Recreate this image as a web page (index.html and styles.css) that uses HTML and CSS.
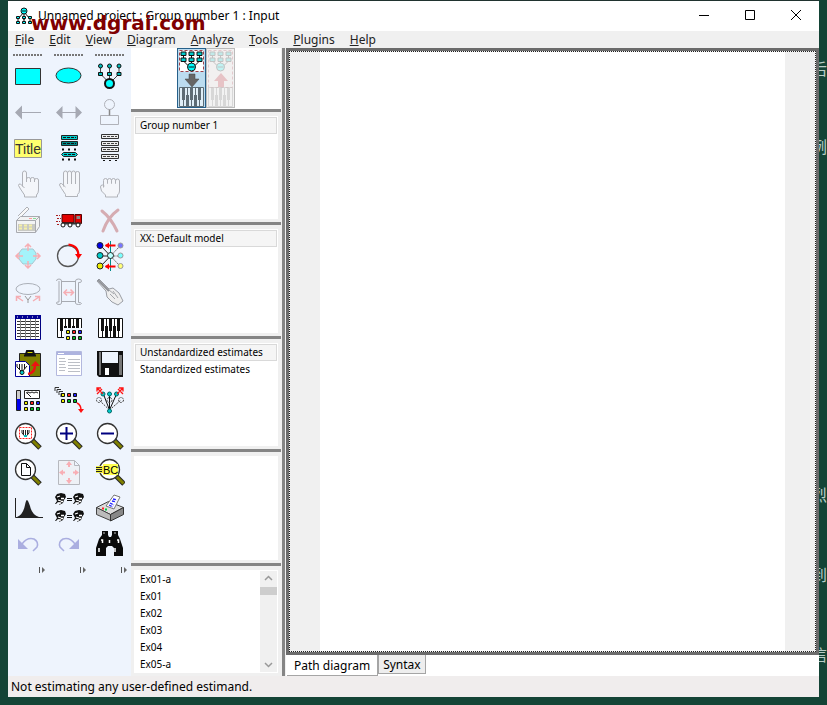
FILE: index.html
```html
<!DOCTYPE html>
<html lang="en">
<head>
  <meta charset="UTF-8" />
  <meta name="viewport" content="width=device-width, initial-scale=1.0" />
  <title>Unnamed project : Group number 1 : Input</title>
  <link rel="stylesheet" href="styles.css">
</head>
<body>

  <!-- Desktop text behind the window -->
  <div class="desktop-text" lang="zh" aria-hidden="true">
    <span class="note note-1">后</span>
    <span class="note note-2">例</span>
    <span class="note note-3">烈</span>
    <span class="note note-4">到</span>
    <span class="note note-5">信</span>
  </div>

  <!-- Shared shapes -->
  <svg class="shapes" aria-hidden="true">
    <defs>
      <g id="lens">
        <path d="M19 19l8 8" stroke="#222" stroke-width="5" />
        <path d="M19.500 19.500l7 7" stroke="#808000" stroke-width="3" />
        <circle cx="12.500" cy="12.500" r="10" fill="#fff" stroke="#333" stroke-width="1.300" />
      </g>
      <g id="chips" stroke="#111">
        <path d="M.5.5h3v3h-3zM.5 6.500h3v3h-3z" fill="#ee0" />
        <path d="M6.500.5h3v3h-3z" fill="#f22" />
        <path d="M12.500.5h3v3h-3z" fill="#22f" />
        <path d="M6.500 6.500h3v3h-3zM12.500 6.500h3v3h-3z" fill="#0b2" />
      </g>
      <g id="piano">
        <path d="M.5.5h24v19H.5z" fill="#fff" stroke="#111" />
        <path d="M4.500 0v20M8.500 0v20M12.500 0v20M16.500 0v20M20.500 0v20" stroke="#111" />
        <path d="M4.500 1v12M8.500 8v11M12.500 1v12M16.500 8v11M20.500 1v12" stroke="#111" stroke-width="3" />
      </g>
      <g id="tree" stroke="#111">
        <path d="M3 3v7l8 8M11 3v15M19 3v7l-8 8" fill="none" />
        <path d="M.5 1h5v3.500h-5zM8.500 1h5v3.500h-5zM16.500 1h5v3.500h-5zM.5 7h5v3.500h-5zM8.500 7h5v3.500h-5zM16.500 7h5v3.500h-5z" fill="#0cc" />
        <circle cx="11" cy="16" r="4" fill="#0ff" />
        <path d="M8 16h6" />
      </g>
      <g id="face">
        <path d="M1 4l2-3 4-1 4 1 1 3-2 3-1 3-4 2 1-2-2-1-2 2H1l2-3z" fill="#111" />
        <path d="M3 4l3-1M7 5.500h3M4 7l3 1M7 8.500h2M4.500 10H7" stroke="#fff" stroke-width="1.300" fill="none" />
      </g>
    </defs>
  </svg>

  <div class="window">

    <header class="titlebar">
      <svg class="app-icon" viewBox="0 0 18 18">
        <path d="M9 5L3 12M9 5v8M9 5l6 7M3 12v4M9 12v4M15 12v4" stroke="#111" fill="none" />
        <circle cx="9" cy="4" r="3" fill="#0ff" stroke="#111" /><path d="M7 4h4" stroke="#111" />
        <path d="M1.500 9.500h3v2h-3zM7.500 9.500h3v2h-3zM13.500 9.500h3v2h-3zM1.500 14.500h3v2h-3zM7.500 14.500h3v2h-3zM13.500 14.500h3v2h-3z" fill="#0ff" stroke="#111" />
      </svg>
      <h1>Unnamed project : Group number 1 : Input</h1>
      <div class="window-buttons">
        <button aria-label="Minimize"><svg viewBox="0 0 12 12"><path d="M1 5.500h10" /></svg></button>
        <button aria-label="Maximize"><svg viewBox="0 0 12 12"><path d="M1.500.5h9v9h-9z" /></svg></button>
        <button aria-label="Close"><svg viewBox="0 0 12 12"><path d="M1 0l10 10M11 0L1 10" /></svg></button>
      </div>
      <span class="watermark">www.dgrai.com</span>
    </header>

    <nav class="menubar">
      <a href="#"><u>F</u>ile</a>
      <a href="#"><u>E</u>dit</a>
      <a href="#"><u>V</u>iew</a>
      <a href="#"><u>D</u>iagram</a>
      <a href="#"><u>A</u>nalyze</a>
      <a href="#"><u>T</u>ools</a>
      <a href="#"><u>P</u>lugins</a>
      <a href="#"><u>H</u>elp</a>
    </nav>

    <main class="workspace">

      <!-- Tool palette -->
      <div class="toolbar">
        <div class="grip"></div>
        <div class="grip"></div>
        <div class="grip"></div>

        <button aria-label="Draw observed variables"><svg viewBox="0 0 30 30"><path d="M2.500 7.500h25v16h-25z" fill="#0ff" stroke="#333" /></svg></button>
        <button aria-label="Draw unobserved variables"><svg viewBox="0 0 30 30"><ellipse cx="14.500" cy="14.500" rx="12.500" ry="7.500" fill="#0ff" stroke="#333" /></svg></button>
        <button aria-label="Draw latent variable with indicators"><svg viewBox="0 0 30 30">
          <path d="M5.500 5v8l9 9M14.500 5v17M24 5v8l-9 9" fill="none" stroke="#444" />
          <g fill="#0bb" stroke="#111"><circle cx="5.500" cy="5" r="2" /><circle cx="14.500" cy="5" r="2" /><circle cx="24" cy="5" r="2" /><path d="M3.500 11.500h4v3h-4zM12.500 11.500h4v3h-4zM22 11.500h4v3h-4z" /></g>
          <circle cx="14.500" cy="22.500" r="4.500" fill="#0ff" stroke="#111" stroke-width="2" />
        </svg></button>

        <button aria-label="Draw path"><svg viewBox="0 0 30 30"><path d="M9 15.500h19" stroke="#a6a9b3" /><path d="M2 15.500l7-7v14z" fill="#a6a9b3" /></svg></button>
        <button aria-label="Draw covariance"><svg viewBox="0 0 30 30"><path d="M8 15.500h14" stroke="#a6a9b3" /><path d="M2 15.500l6.500-6.500v13zM28 15.500L21.500 9v13z" fill="#a6a9b3" /></svg></button>
        <button aria-label="Add unique variable"><svg viewBox="0 0 30 30"><g fill="none" stroke="#b0b2b9"><circle cx="14.500" cy="7.500" r="5" /><path d="M5.500 18.500h18v9h-18z" /><path d="M14.500 12.500v6" stroke="#888" stroke-width="1.500" /></g></svg></button>

        <button aria-label="Figure captions"><svg viewBox="0 0 30 30"><path d="M1.500 6.500h27v18h-27z" fill="#ffff6e" stroke="#999" /><text class="caption-glyph" x="2" y="21">Title</text></svg></button>
        <button aria-label="List variables in model"><svg viewBox="0 0 30 30">
          <g fill="#0cc" stroke="#222"><path d="M7.500 2.500h16v4h-16z" /><path d="M7.500 8.500h16v4h-16z" fill="#088" /><path d="M9.500 19.500h12l2 2-2 2h-12l-2-2z" /></g>
          <path d="M9 4.500h13M9 10.500h13M10 21.500h12" stroke="#111" stroke-dasharray="3 1" />
          <path d="M8 16.500h15M8 26.500h15" stroke="#111" stroke-width="2" stroke-dasharray="2 4" />
        </svg></button>
        <button aria-label="List variables in data set"><svg viewBox="0 0 30 30">
          <path d="M6.500 1.500h17v4h-17zM6.500 8.500h17v4h-17zM6.500 14.500h17v4h-17zM6.500 21.500h17v4h-17z" fill="#eee" stroke="#333" />
          <path d="M8 3.500h14M8 10.500h14M8 16.500h14M8 23.500h14" stroke="#444" stroke-dasharray="3 1" /><path d="M8 27.500h15" stroke="#111" stroke-dasharray="2 4" />
        </svg></button>

        <button aria-label="Select one object"><svg viewBox="0 0 30 30"><path class="hand" d="M9.500 17.500V4q0-2 2-2t2 2v9-3q0-1.500 2-1.500t2 1.500v3-3q0-1.500 2-1.500t2 1.500v3-2q0-1.500 2-1.500t2 1.500v10q0 3-2 5v2h-12v-2l-4-6-2-3.500q0-2 2-1.500l4 4" /></svg></button>
        <button aria-label="Select all objects"><svg viewBox="0 0 30 30"><path class="hand" d="M9.500 17.500V4q0-2 2-2t2 2v11V4q0-2 2-2t2 2v11V4q0-2 2-2t2 2v11V4q0-1.500 2-1.500t2 1.500v17q0 3-2 4.500v2h-12v-2l-4-6-2-3.500q0-2 2-1.500l4 3.500" /></svg></button>
        <button aria-label="Deselect all objects"><svg viewBox="0 0 30 30"><path class="hand" d="M8.500 18.500v-7q0-2 2-2t2 2v3-3q0-2 2-2t2 2v3-3q0-2 2-2t2 2v3-2.500q0-2 2-2t2 2v10q0 2.500-2 4v2h-12v-2l-4-4-1-4q0-2 2-2l2 1" /></svg></button>

        <button aria-label="Duplicate objects"><svg viewBox="0 0 30 30">
          <path d="M5 11L14 2l2 2-8 8" fill="#f8f8f8" stroke="#aeb0b6" /><path d="M3.500 15.500l4-4h19v10l-4 6h-19z" fill="#f2f3f4" stroke="#a8aab0" /><path d="M3.500 15.500h19v12M22.500 15.500l4-4" fill="none" stroke="#a8aab0" />
          <path d="M5 19h17v7H5z" fill="#c8c9c4" /><path d="M6 20.500h3M11 20.500h3M16 20.500h3M6 23.500h3M11 23.500h3M16 23.500h3" stroke="#f5f0a8" stroke-width="2" /><path d="M16 13.500h3" stroke="#f99" /><path d="M20 13.500h3" stroke="#8d9" />
        </svg></button>
        <button aria-label="Move objects"><svg viewBox="0 0 30 30">
          <path d="M8 9.500h12v8H8zM21 9.500h6.500v9H21z" fill="#e00000" stroke="#500" /><path d="M8 18.500h19" stroke="#333" stroke-width="2" /><path d="M22.500 11h3.500v3h-3.500z" fill="#888" />
          <path d="M2 10.500h4M3 13.500h4M2 16.500h4M3 19.500h3" stroke="#a22" stroke-dasharray="2 1" /><g fill="#fff" stroke="#111"><circle cx="9" cy="20" r="2" /><circle cx="16" cy="20" r="2" /><circle cx="24" cy="20" r="2" /></g>
        </svg></button>
        <button aria-label="Erase objects"><svg viewBox="0 0 30 30"><path d="M7 6q9 7 15 20M23 5Q13 12 8 26" fill="none" stroke="#d5acb2" stroke-width="3" stroke-linecap="round" /></svg></button>

        <button aria-label="Change shape of objects"><svg viewBox="0 0 30 30">
          <path d="M9 8h11l3 4v6l-4 5h-9l-4-5v-6z" fill="#a4f3fa" stroke="#a9c6cf" />
          <g fill="none" stroke="#f6aeb4" stroke-width="1.500"><path d="M15 3v7M12 6l3-3 3 3M15 20v7M12 24l3 3 3-3M3 15h7M6 12l-3 3 3 3M20 15h7M24 12l3 3-3 3" /></g>
        </svg></button>
        <button aria-label="Rotate indicators"><svg viewBox="0 0 30 30"><circle cx="14" cy="15" r="10.500" fill="none" stroke="#555" stroke-width="1.300" /><path d="M14.500 3.500q10 1 10 11" fill="none" stroke="#f00" stroke-width="2" /><path d="M21 13h7l-3.500 5z" fill="#f00" /></svg></button>
        <button aria-label="Reflect indicators"><svg viewBox="0 0 30 30">
          <path d="M15.500 15L6 5M15.500 15H6M15.500 15L6 25" stroke="#222" /><path d="M15.500 15L25 5M15.500 15H25M15.500 15L25 25" stroke="#666" stroke-dasharray="2 1" /><path d="M15.500 0v30" stroke="#088" />
          <path d="M20.500 4.500h-10M20.500 25.500h-10" stroke="#f00" stroke-width="2" /><path d="M10 4.500l4-3v6zM10 25.500l4-3v6z" fill="#f00" />
          <g stroke="#222"><circle cx="5" cy="4.500" r="3" fill="#00e" /><circle cx="5" cy="14.500" r="3" fill="#0cc" /><circle cx="5" cy="25" r="3" fill="#ee0" /><circle cx="15.500" cy="14.500" r="3" fill="#bff" /></g>
          <g stroke="#999"><circle cx="25.500" cy="4.500" r="2.500" fill="#77f" /><circle cx="25.500" cy="14.500" r="2.500" fill="#7ff" /><circle cx="25.500" cy="25" r="2.500" fill="#ff7" /></g>
        </svg></button>

        <button aria-label="Move parameter values"><svg viewBox="0 0 30 30"><ellipse cx="15" cy="12" rx="12" ry="5.500" fill="none" stroke="#abb0b8" /><path d="M12 19l3 4 3-4M15 22v4" fill="none" stroke="#999" /><path d="M10 24l-6-4M3.500 24v-4.500H8M20 24l6-4M22 19.500h4.500V24" fill="none" stroke="#f4adb3" stroke-width="1.500" /></svg></button>
        <button aria-label="Reposition path diagram"><svg viewBox="0 0 30 30"><g fill="none" stroke="#a8abb2"><path d="M7.500 4.500h14v20h-14zM2.500 4q0-2 2.500-2t2.500 2v22q0 1.500-2.500 1.500t-2.500-1.500 2.500-1V4M21.500 4q0-2 3-2t3 2-3 1.500v20q3 0 3 1t-3 1-3-1.500z" /></g><path d="M10 15.500h9M13 12.500l-3 3 3 3M16.500 12.500l3 3-3 3" fill="none" stroke="#f6aeb4" stroke-width="1.500" /></svg></button>
        <button aria-label="Touch up a variable"><svg viewBox="0 0 30 30"><path d="M2 4l2-2 10 10 4-1 6 5 4 8-5 4-6-3-5-5-1-6z" fill="#eee" stroke="#9a9da4" /><path d="M3 3l11 11" stroke="#8f9298" stroke-width="2" /><path d="M15 17l5 5M18 14l5 7M14 13l5 4" stroke="#a4a6ab" /></svg></button>

        <button aria-label="Select data files"><svg viewBox="0 0 30 30"><path d="M2.500 2.500h25v24h-25z" fill="#fff" stroke="#000080" /><path d="M2 2h26v4H2z" fill="#000090" /><path d="M4 8.500h22M4 11.500h22M4 14.500h22M4 17.500h22M4 20.500h22M4 23.500h22" stroke="#333" /><path d="M7.500 6v20M12.500 6v20M17.500 6v20M22.500 6v20" stroke="#888" /><path d="M4 4h22" stroke="#fff" stroke-dasharray="1 4" /></svg></button>
        <button aria-label="Analysis properties"><svg viewBox="0 0 30 30"><use href="#piano" x="3" y="5" /><path d="M10 15h20v13H10z" fill="#eef4fd" /><use href="#chips" x="12" y="17" /></svg></button>
        <button aria-label="Calculate estimates"><svg viewBox="0 0 30 30"><use href="#piano" x="3" y="5" /></svg></button>

        <button aria-label="Copy to clipboard"><svg viewBox="0 0 30 30">
          <path d="M6.500 4.500h21v23h-21z" fill="#808000" stroke="#222" /><path d="M11 6.500h12M13 5h8l-1-3h-6z" stroke="#111" stroke-width="2" fill="#dd0" />
          <path d="M2.500 12.500h10l4 4v11h-14z" fill="#fff" stroke="#009" /><path d="M4 15v3l5 5M9 15v8M14 17l-5 6M6.500 15v5M11.500 15v5" fill="none" stroke="#111" /><circle cx="9" cy="23.500" r="2" fill="#0cc" stroke="#111" />
          <path d="M15 25q7-1 7-9" fill="none" stroke="#e11" stroke-width="2.500" /><path d="M18 17l4.500-5 4.500 5z" fill="#e11" />
        </svg></button>
        <button aria-label="View text"><svg viewBox="0 0 30 30"><path d="M2.500 2.500h25v24h-25z" fill="#fff" stroke="#b3b8de" /><path d="M3 3h24v3H3z" fill="#adb3df" /><path d="M4 4.500h6" stroke="#fff" /><path d="M5 9.500h6M5 12.500h7M5 15.500h6M5 18.500h7M5 21.500h6M14 10.500h12M14 13.500h12M14 16.500h12M14 19.500h12M14 22.500h12" stroke="#bcbfc6" /></svg></button>
        <button aria-label="Save the current path diagram"><svg viewBox="0 0 30 30"><path d="M2 2h26v26H4l-2-2z" fill="#111" /><path d="M4 3h2v23H4zM24 6h3v20h-3z" fill="#777" /><path d="M7 3h16v11H7z" fill="#eef4fd" /><path d="M10 19h4v7h-4z" fill="#fff" /></svg></button>

        <button aria-label="Object properties"><svg viewBox="0 0 30 30"><path d="M3.500 5.500h4v20h-4z" fill="#ccc" stroke="#222" /><path d="M4 14h3.500v11H4z" fill="#00e" /><path d="M11.500 5.500h15v8h-15z" fill="#fff" stroke="#222" /><path d="M13 8l2-1 2 1 2-1 2 1 2-1 2 1M14 8l4 4" fill="none" stroke="#222" /><use href="#chips" x="11" y="16" /></svg></button>
        <button aria-label="Drag properties"><svg viewBox="0 0 30 30"><path d="M1 6V2.500h4M3 8V4.500h4M5 10V6.500h4M7 12V8.500h4" fill="none" stroke="#333" /><use href="#chips" x="7" y="8" /><path d="M23 18q4 2 4 7" fill="none" stroke="#f11" stroke-width="1.500" /><path d="M24 24h6l-3 4z" fill="#f11" /></svg></button>
        <button aria-label="Preserve symmetries"><svg viewBox="0 0 30 30">
          <path d="M14.500 25L8 8M14.500 25V8M14.500 25L22 8" stroke="#111" /><path d="M14.500 25L4 15M14.500 25L26 15" stroke="#444" stroke-dasharray="2 1" /><g fill="none" stroke="#444" stroke-dasharray="2 1"><circle cx="4" cy="15" r="2.500" /><circle cx="14.500" cy="15" r="2.500" /><circle cx="26" cy="15" r="2.500" /></g>
          <g fill="#0cc" stroke="#066"><circle cx="8" cy="9" r="2" /><circle cx="14.500" cy="9" r="2" /><circle cx="21.500" cy="9" r="2" /><circle cx="14.500" cy="26" r="2" /></g>
          <path d="M2 3l6 6M2 6.500V3h4M28 3l-6 6M24 3h4v3.500M2 9l5-5M28 9l-5-5" fill="none" stroke="#f11" stroke-width="1.300" />
        </svg></button>

        <button aria-label="Zoom in on an area"><svg viewBox="0 0 30 30"><use href="#lens" /><path d="M6.500 6.500h12v11h-12z" fill="#fff" stroke="#f22" stroke-dasharray="2 1" /><path d="M9 9v3l3.500 4M12.500 9v6M16 9v3l-3.500 4M10.500 9v5M14.500 9v5" fill="none" stroke="#222" /><path d="M11 14h3v2h-3z" fill="#0bb" /></svg></button>
        <button aria-label="Zoom in"><svg viewBox="0 0 30 30"><use href="#lens" /><path d="M6 12.500h13M12.500 6v13" stroke="#000080" stroke-width="2" /></svg></button>
        <button aria-label="Zoom out"><svg viewBox="0 0 30 30"><use href="#lens" /><path d="M6 12.500h13" stroke="#000080" stroke-width="2" /></svg></button>

        <button aria-label="Zoom page"><svg viewBox="0 0 30 30"><use href="#lens" /><path d="M8.500 6.500h5l4 4v8h-9zM13.500 6.500v4h4" fill="#fff" stroke="#111" /></svg></button>
        <button aria-label="Resize to fit page"><svg viewBox="0 0 30 30"><path d="M4.500 3.500h16l5 5v19h-21zM20.500 3.500v5h5" fill="#eef1f6" stroke="#b6b8be" /><g fill="#f8aeb4"><path d="M15 4l3 4h-6zM15 27l3-4h-6zM5 15.500l4-3v6zM25 15.500l-4-3v6z" /><path d="M14 8h2v2h-2zM14 21h2v2h-2zM9 14.500h2v2H9zM19 14.500h2v2h-2z" /></g></svg></button>
        <button aria-label="Examine with loupe"><svg viewBox="0 0 30 30"><use href="#lens" x="2" y="0" /><path d="M8 7h15v11H8z" fill="#ffff50" /><path d="M1 9h7v7H1z" fill="#ee4" /><path d="M1 10.500h6M1 12.500h6M1 14.500h6" stroke="#222" /><text class="loupe-glyph" x="8" y="17">BC</text></svg></button>

        <button aria-label="Bayesian estimation"><svg viewBox="0 0 30 30"><path d="M2.500 5v19.500H30" fill="none" stroke="#222" /><path d="M4 24q6-2 8-12 1-5 2-5t3 6q2 9 9 11z" fill="#222" /></svg></button>
        <button aria-label="Multiple-group analysis"><svg viewBox="0 0 30 30"><use href="#face" x="0" y="0" /><use href="#face" x="18" y="0" /><use href="#face" x="0" y="17" /><use href="#face" x="18" y="17" /><path d="M13 5.500h5M13 7.500h5M13 22.500h5M13 24.500h5" stroke="#111" /></svg></button>
        <button aria-label="Print the selected path diagrams"><svg viewBox="0 0 30 30">
          <path d="M1.500 14.500l12-6 15 6-13 7z" fill="#ddd" stroke="#444" /><path d="M1.500 14.500v7l14 6v-6z" fill="#bbb" stroke="#444" /><path d="M15.500 21.500l13-7v7l-13 6.500z" fill="#888" stroke="#333" /><path d="M11 13l8-11 6 2-6 12z" fill="#fff" stroke="#777" /><path d="M18 6l4 1M17 8l4 1M15 10l4 2M14 12l4 2" stroke="#22f" stroke-width="1.300" stroke-dasharray="3 1" /><path d="M7 15.500h2" stroke="#f22" stroke-width="2" /><path d="M10 16.500h2" stroke="#0c4" stroke-width="2" />
        </svg></button>

        <button aria-label="Undo"><svg viewBox="0 0 30 30"><path d="M9 15q5-7 12-5 5 3 3 8l-4 4" fill="none" stroke="#aaaee0" stroke-width="1.500" /><path d="M5 10v10h10z" fill="#aaaee0" /></svg></button>
        <button aria-label="Redo"><svg viewBox="0 0 30 30"><path d="M21 15q-5-7-12-5-5 3-3 8l4 4" fill="none" stroke="#aaaee0" stroke-width="1.500" /><path d="M25 10v10H15z" fill="#aaaee0" /></svg></button>
        <button aria-label="Search"><svg viewBox="0 0 30 30"><path d="M7 2h6v4l1 2h2l1-2V2h6v4l2 4 3 9v8h-9v-8l-2-2h-4l-2 2v8H1v-8l3-9 3-4z" fill="#0a0a0a" /><path d="M8.500 4h1M19.500 4h1M6 11h1.500v3M4 19v4M22 11h1.500v3M20 19v4M14.500 11v3" stroke="#fff" stroke-width="1.500" fill="none" /></svg></button>

        <div class="more"><svg viewBox="0 0 8 8"><path d="M1.500 1v6" stroke="#555" /><path d="M4 1l3 3-3 3z" fill="#666" /></svg></div>
        <div class="more"><svg viewBox="0 0 8 8"><path d="M1.500 1v6" stroke="#555" /><path d="M4 1l3 3-3 3z" fill="#666" /></svg></div>
        <div class="more"><svg viewBox="0 0 8 8"><path d="M1.500 1v6" stroke="#555" /><path d="M4 1l3 3-3 3z" fill="#666" /></svg></div>
      </div>

      <!-- Groups, models, estimates, files -->
      <aside class="side">
        <div class="view-switch">
          <button class="active" aria-label="View the input path diagram"><svg viewBox="0 0 27 58">
            <path d="M1.500 1.500h24v21h-24z" fill="#fff" stroke="#a04048" stroke-dasharray="3 2" />
            <use href="#tree" x="2.500" y="2" />
            <path d="M11 25h6v5h4l-7 8-7-8h4z" fill="#666" stroke="#444" stroke-width=".5" />
            <g class="keys"><use href="#piano" x="1" y="38" /></g>
          </svg></button>
          <button class="inactive" aria-label="View the output path diagram"><svg viewBox="0 0 27 58">
            <path d="M1.500 1.500h24v37h-24z" fill="#f8f0f0" stroke="#b03040" stroke-dasharray="3 2" />
            <use href="#tree" x="2.500" y="2" />
            <path d="M11 38h6v-6h4l-7-8-7 8h4z" fill="#c01020" />
            <g class="keys"><use href="#piano" x="1" y="38" /></g>
          </svg></button>
        </div>

        <section class="panel">
          <ul class="list">
            <li><button class="selected">Group number 1</button></li>
          </ul>
        </section>
        <section class="panel">
          <ul class="list">
            <li><button class="selected">XX: Default model</button></li>
          </ul>
        </section>
        <section class="panel">
          <ul class="list">
            <li><button class="selected">Unstandardized estimates</button></li>
            <li><button>Standardized estimates</button></li>
          </ul>
        </section>
        <section class="panel">
          <ul class="list"></ul>
        </section>
        <section class="panel">
          <ul class="list">
            <li><button>Ex01-a</button></li>
            <li><button>Ex01</button></li>
            <li><button>Ex02</button></li>
            <li><button>Ex03</button></li>
            <li><button>Ex04</button></li>
            <li><button>Ex05-a</button></li>
          </ul>
          <div class="scrollbar">
            <button aria-label="Scroll up"><svg viewBox="0 0 9 9"><path d="M1 6l3.500-3.500L8 6" /></svg></button>
            <div class="thumb"></div>
            <button aria-label="Scroll down"><svg viewBox="0 0 9 9"><path d="M1 3l3.500 3.500L8 3" /></svg></button>
          </div>
        </section>
      </aside>

      <div class="splitter"></div>

      <!-- Drawing area -->
      <section class="diagram">
        <div class="canvas">
          <div class="paper"></div>
        </div>
        <div class="tabs">
          <button class="tab tab-active">Path diagram</button>
          <button class="tab">Syntax</button>
        </div>
      </section>

    </main>

    <footer class="statusbar">Not estimating any user-defined estimand.</footer>

  </div>

</body>
</html>
```
FILE: styles.css
```css
* {
  box-sizing: border-box;
  margin: 0;
  padding: 0;
}

body {
  font-family: 'Noto Sans', 'Open Sans', sans-serif;
  font-size: 12px;
  color: #000;
  background: #144436;
  min-height: 100vh;
  padding: 0 8px 8px;
  display: flex;
  position: relative;
  overflow: hidden;
}

button {
  font: inherit;
  color: inherit;
  background: none;
  border: none;
}

svg {
  display: block;
}

.shapes {
  position: absolute;
  width: 0;
  height: 0;
}

/* Desktop behind the window */
.desktop-text {
  position: absolute;
  top: 0;
  right: 0;
  bottom: 0;
  width: 8px;
  overflow: hidden;
  font-family: 'Noto Sans CJK SC', sans-serif;
  font-size: 16px;
  line-height: 20px;
  color: #b9cdc6;
}

.note {
  position: absolute;
  right: 0;
}

.note-1 { top: 58px; }
.note-2 { top: 136px; }
.note-3 { top: 484px; }
.note-4 { top: 564px; }
.note-5 { top: 644px; }

.window {
  flex: 1;
  min-width: 0;
  display: flex;
  flex-direction: column;
  background: #fff;
  border-top: 1px solid #20332f;
}

/* Title bar */
.titlebar {
  display: flex;
  align-items: center;
  height: 30px;
  padding-left: 7px;
  position: relative;
}

.app-icon {
  width: 18px;
  height: 18px;
  margin-right: 5px;
}

.titlebar h1 {
  flex: 1;
  font-size: 12px;
  font-weight: normal;
  line-height: 30px;
  white-space: nowrap;
}

.window-buttons {
  display: flex;
}

.window-buttons button {
  width: 46px;
  height: 30px;
  display: grid;
  place-items: center;
}

.window-buttons svg {
  width: 12px;
  height: 12px;
  fill: none;
  stroke: #000;
}

.watermark {
  position: absolute;
  left: 23px;
  top: 10px;
  font: bold 20px/24px 'DejaVu Sans', sans-serif;
  color: #800000;
}

/* Menu */
.menubar {
  display: flex;
  gap: 15px;
  height: 17px;
  padding-left: 7px;
  background: #f0f0f0;
  line-height: 17px;
}

.menubar a {
  color: #222;
  text-decoration: none;
}

.workspace {
  flex: 1;
  display: flex;
  min-height: 0;
}

/* Tool palette */
.toolbar {
  display: grid;
  grid-template-columns: repeat(3, 41px);
  grid-template-rows: 10px repeat(14, 36px) 16px;
  background: #eef4fd;
}

.toolbar button {
  display: grid;
  place-items: center start;
  padding-left: 5px;
}

.toolbar button svg {
  width: 30px;
  height: 30px;
}

.grip {
  margin: 6px 7px 0 5px;
  height: 2px;
  background: repeating-linear-gradient(to right, #777 0 2px, transparent 2px 3px);
}

.hand {
  fill: #f4f6fa;
  stroke: #b0b2b8;
}

.caption-glyph {
  font: 14px 'Liberation Sans', sans-serif;
  fill: #333;
}

.loupe-glyph {
  font: 11px 'Liberation Sans', sans-serif;
}

.more {
  display: flex;
  justify-content: flex-end;
  align-items: center;
  padding-right: 3px;
}

.more svg {
  width: 8px;
  height: 8px;
}

/* Side panels */
.side {
  width: 150px;
  display: flex;
  flex-direction: column;
}

.view-switch {
  display: flex;
  justify-content: center;
  height: 61px;
}

.view-switch button {
  width: 29px;
  height: 60px;
  border: 1px solid #bbb;
}

.view-switch .active {
  background: #bcdcf0;
  border-color: #26608a;
}

.view-switch .inactive {
  background: #f1f1f1;
}

.inactive svg {
  opacity: 0.2;
}

.keys {
  opacity: 0.55;
}

.panel {
  flex: 1 1 0;
  display: flex;
  min-height: 0;
  padding: 4px 3px 3px;
  background: #f0f0f0;
  border-top: 3px solid #858585;
}

.list {
  flex: 1;
  padding: 1px;
  background: #fff;
  list-style: none;
  overflow: hidden;
}

.list button {
  display: block;
  width: 100%;
  height: 17px;
  padding: 0 4px 2px;
  border: 1px solid transparent;
  font-size: 10px;
  line-height: 15px;
  text-align: left;
  white-space: nowrap;
}

.list .selected {
  background: #f5f5f5;
  border-color: #d9d9d9;
}

.scrollbar {
  display: flex;
  flex-direction: column;
  width: 18px;
  background: #f0f0f0;
  border: 1px solid #fff;
  border-left: none;
}

.scrollbar button {
  height: 16px;
  display: grid;
  place-items: center;
}

.scrollbar button:last-child {
  margin-top: auto;
}

.scrollbar svg {
  width: 9px;
  height: 9px;
  fill: none;
  stroke: #999;
  stroke-width: 1.5;
}

.thumb {
  height: 8px;
  background: #cdcdcd;
}

.splitter {
  width: 5px;
  background: #858585;
  border: solid #f0f0f0;
  border-width: 0 1px;
}

/* Drawing area */
.diagram {
  flex: 1;
  display: flex;
  flex-direction: column;
}

.canvas {
  flex: 1;
  display: flex;
  border: 3px solid #6b6b6b;
  background: #f0f0f0;
}

.paper {
  flex: 1;
  padding: 0 30px;
  background: #fff content-box;
  border: 1px dotted #222;
}

.tabs {
  display: flex;
  align-items: flex-start;
  height: 21px;
  padding-left: 1px;
}

.tab {
  height: 19px;
  padding: 0 4px;
  background: #eee;
  border: 1px solid #a5a5a5;
  border-top: none;
  line-height: 19px;
}

.tab-active {
  height: 21px;
  padding: 1px 7px 0;
  background: #fff;
  border-left: none;
}

.statusbar {
  height: 21px;
  padding-left: 3px;
  line-height: 21px;
  background: #f0eded;
}
```
